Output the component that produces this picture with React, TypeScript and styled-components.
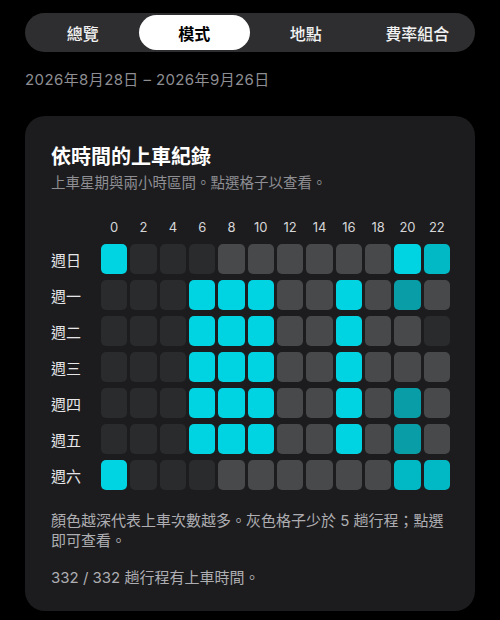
import React from "react";
import styled, { createGlobalStyle } from "styled-components";

const GlobalStyle = createGlobalStyle`
  html, body {
    margin: 0;
    padding: 0;
    background: #000000;
  }
  body {
    font-family: Inter, "Noto Sans CJK TC", sans-serif;
    color: #ffffff;
  }
`;

const Page = styled.div`
  width: 500px;
  height: 620px;
  box-sizing: border-box;
  padding: 13px 25px 0 25px;
  background: #000000;
  overflow: hidden;
`;

const Segmented = styled.div`
  display: grid;
  grid-template-columns: repeat(4, 1fr);
  height: 39px;
  padding: 2px;
  box-sizing: border-box;
  border-radius: 20px;
  background: #2e2e30;
`;

const Segment = styled.div<{ $active?: boolean }>`
  display: flex;
  align-items: center;
  justify-content: center;
  border-radius: 18px;
  font-size: 16px;
  font-weight: ${(p) => (p.$active ? 600 : 500)};
  color: ${(p) => (p.$active ? "#000000" : "#f2f2f2")};
  background: ${(p) => (p.$active ? "#ffffff" : "transparent")};
`;

const DateRange = styled.div`
  margin-top: 17px;
  font-size: 15px;
  line-height: 22px;
  color: #8e8e93;
  letter-spacing: 0.4px;
`;

const Card = styled.div`
  margin-top: 25px;
  background: #1c1c1e;
  border-radius: 20px;
  padding: 27px 25px 23px 26px;
`;

const Title = styled.div`
  font-size: 20px;
  line-height: 28px;
  font-weight: 700;
  color: #ffffff;
`;

const Subtitle = styled.div`
  margin-top: 1px;
  font-size: 14.5px;
  line-height: 22px;
  color: #8e8e93;
`;

const Grid = styled.div`
  margin-top: 25px;
  display: grid;
  grid-template-columns: 47px repeat(12, 1fr);
  column-gap: 3px;
  row-gap: 6px;
  align-items: center;
`;

const HourLabel = styled.div`
  font-size: 13px;
  line-height: 16px;
  text-align: center;
  color: #d6d6d8;
  margin-bottom: 3px;
`;

const DayLabel = styled.div`
  font-size: 15px;
  color: #e6e6e8;
`;

const levelColors: Record<string, string> = {
  d: "#2a2b2c",
  g: "#48494b",
  c: "#00d3e1",
  m: "#00b9c5",
  t: "#099ea7",
};

const Cell = styled.div<{ $level: string }>`
  height: 30px;
  border-radius: 5px;
  background: ${(p) => levelColors[p.$level]};
`;

const Footer = styled.div`
  margin-top: 21px;
  font-size: 15px;
  line-height: 20px;
  color: #aeaeb2;
`;

const Summary = styled.div`
  margin-top: 17px;
  font-size: 15px;
  line-height: 20px;
  color: #aeaeb2;
`;

const tabs = ["總覽", "模式", "地點", "費率組合"];
const hours = [0, 2, 4, 6, 8, 10, 12, 14, 16, 18, 20, 22];

const rows: { day: string; cells: string }[] = [
  { day: "週日", cells: "cdddggggggcm" },
  { day: "週一", cells: "dddcccggcgtg" },
  { day: "週二", cells: "dddcccggcggd" },
  { day: "週三", cells: "dddcccggcggg" },
  { day: "週四", cells: "dddcccggcgtg" },
  { day: "週五", cells: "dddcccggcgtg" },
  { day: "週六", cells: "cdddggggggmm" },
];

export default function App() {
  return (
    <Page>
      <GlobalStyle />
      <Segmented>
        {tabs.map((t) => (
          <Segment key={t} $active={t === "模式"}>
            {t}
          </Segment>
        ))}
      </Segmented>
      <DateRange>2026年8月28日 – 2026年9月26日</DateRange>
      <Card>
        <Title>依時間的上車紀錄</Title>
        <Subtitle>上車星期與兩小時區間。點選格子以查看。</Subtitle>
        <Grid>
          <div />
          {hours.map((h) => (
            <HourLabel key={h}>{h}</HourLabel>
          ))}
          {rows.map((r) => (
            <React.Fragment key={r.day}>
              <DayLabel>{r.day}</DayLabel>
              {r.cells.split("").map((lv, i) => (
                <Cell key={i} $level={lv} />
              ))}
            </React.Fragment>
          ))}
        </Grid>
        <Footer>
          顏色越深代表上車次數越多。灰色格子少於 5 趟行程；點選
          <br />
          即可查看。
        </Footer>
        <Summary>332 / 332 趟行程有上車時間。</Summary>
      </Card>
    </Page>
  );
}
